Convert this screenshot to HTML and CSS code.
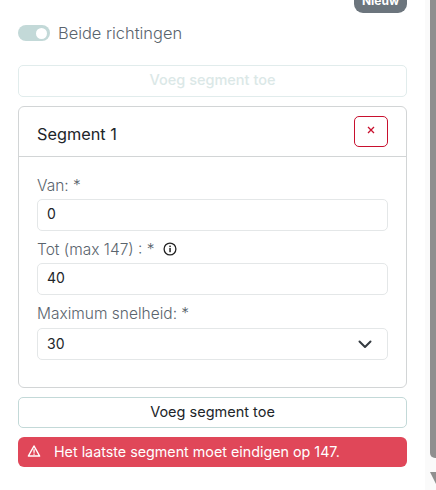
FILE: index.html
```html
<!DOCTYPE html>
<html lang="en">
<head>
  <meta charset="UTF-8" />
  <meta name="viewport" content="width=device-width, initial-scale=1" />
  <title>Segmenten</title>
  <link rel="stylesheet" href="styles.css">
</head>
<body>
  <div class="panel">
    <div class="badge-row"><span class="badge">Nieuw</span></div>

    <div class="switch-row">
      <span class="switch"><span class="switch-knob"></span></span>
      <span class="switch-label">Beide richtingen</span>
    </div>

    <button class="add-btn add-btn-disabled">Voeg segment toe</button>

    <div class="card">
      <div class="card-header">
        <span class="card-title">Segment 1</span>
        <button class="remove-btn">
          <svg width="8" height="8" viewBox="0 0 8 8"><path d="M1 1l6 6M7 1l-6 6" stroke="#c8102e" stroke-width="1.3" fill="none"/></svg>
        </button>
      </div>
      <div class="card-body">
        <label class="field-label">Van: *</label>
        <div class="input">0</div>

        <label class="field-label">Tot (max 147) : *
          <svg class="info-icon" width="14" height="14" viewBox="0 0 14 14">
            <circle cx="7" cy="7" r="5.9" stroke="#222" stroke-width="1.3" fill="none"/>
            <rect x="6.3" y="6" width="1.5" height="4.2" fill="#222"/>
            <rect x="6.3" y="3.6" width="1.5" height="1.5" fill="#222"/>
          </svg>
        </label>
        <div class="input input-tot">40</div>

        <label class="field-label">Maximum snelheid: *</label>
        <div class="input input-select">
          <span>30</span>
          <svg width="16" height="16" viewBox="0 0 16 16"><path d="M2.5 5.5L8 11l5.5-5.5" stroke="#343a40" stroke-width="2" stroke-linecap="round" stroke-linejoin="round" fill="none"/></svg>
        </div>
      </div>
    </div>

    <button class="add-btn add-btn-last">Voeg segment toe</button>

    <div class="alert">
      <svg width="14" height="14" viewBox="0 0 14 14">
        <path d="M7 2L12.6 12H1.4z" stroke="#fff" stroke-width="1.5" stroke-linejoin="round" fill="none"/>
        <rect x="6.4" y="5.2" width="1.3" height="3.6" fill="#fff"/>
        <rect x="6.4" y="9.5" width="1.3" height="1.3" fill="#fff"/>
      </svg>
      <span>Het laatste segment moet eindigen op 147.</span>
    </div>
  </div>

  <!-- page scrollbar -->
  <div class="scroll-track">
    <div class="scroll-thumb"></div>
    <div class="scroll-arrow"></div>
  </div>
</body>
</html>
```

FILE: styles.css
```css
html, body {
  height: 100%;
  overflow: hidden;
}

body {
  font-family: Inter, Lato, sans-serif;
  background: #fff;
  color: #212529;
  margin: 0;
}

.panel {
  width: 389px;
  margin-left: 18px;
}

.badge-row {
  display: flex;
  justify-content: flex-end;
  margin-top: -8px;
  height: 21px;
}

.badge {
  background: #6c757d;
  color: #fff;
  font-size: 12px;
  font-weight: 700;
  width: 53px;
  height: 21px;
  line-height: 17px;
  text-align: center;
  border-radius: 9px;
}

.switch-row {
  display: flex;
  align-items: center;
  gap: 8px;
  height: 26px;
  margin-top: 7px;
}

.switch {
  width: 32px;
  height: 16px;
  border-radius: 8px;
  background: #c3d9d8;
  display: flex;
  justify-content: flex-end;
  align-items: center;
  padding-right: 3px;
  box-sizing: border-box;
}

.switch-knob {
  width: 11px;
  height: 11px;
  border-radius: 50%;
  background: #fff;
}

.switch-label {
  font-size: 16.4px;
  font-weight: 300;
  color: #5a646d;
}

.add-btn {
  display: block;
  width: 100%;
  height: 32px;
  background: #fff;
  border: 1px solid #c3d9d8;
  border-radius: 5px;
  font-family: inherit;
  font-size: 14.5px;
  color: #212529;
  padding: 0 0 2px;
}

.add-btn-disabled {
  margin-top: 19px;
  padding-bottom: 4px;
  border-color: #e1ecec;
  color: #dbe8e7;
  font-weight: 500;
}

.add-btn-last {
  height: 31px;
}

.card {
  margin-top: 9px;
  margin-bottom: 9px;
  height: 282px;
  box-sizing: border-box;
  border: 1px solid #d2d5d6;
  border-radius: 6px;
}

.card-header {
  display: flex;
  justify-content: space-between;
  align-items: center;
  height: 50px;
  box-sizing: border-box;
  border-bottom: 1px solid #d2d5d6;
  padding: 0 18px;
}

.card-title {
  font-size: 16.3px;
  padding-top: 4px;
}

.remove-btn {
  width: 34px;
  height: 31px;
  background: #fff;
  border: 1px solid #c8102e;
  border-radius: 5px;
  padding: 0 0 5px;
}

.card-body {
  padding: 17px 18px 0;
}

.field-label {
  display: block;
  font-size: 15.5px;
  font-weight: 300;
  line-height: 24px;
  height: 25px;
  color: #5a646d;
}

.info-icon {
  margin-left: 4px;
  vertical-align: -1px;
}

.input {
  height: 32px;
  box-sizing: border-box;
  border: 1px solid #e4e7e8;
  border-radius: 5px;
  padding: 0 9px;
  font-size: 14px;
  line-height: 28px;
  margin-bottom: 7px;
}

.input-tot {
  line-height: 27px;
}

.input-select {
  display: flex;
  justify-content: space-between;
  align-items: center;
  padding-right: 14px;
  margin-top: 1px;
}

.alert {
  display: flex;
  align-items: center;
  gap: 13px;
  height: 30px;
  box-sizing: border-box;
  margin-top: 9px;
  padding: 0 0 2px 9px;
  background: #e04759;
  color: #fff;
  border-radius: 6px;
  font-size: 14.3px;
}

.scroll-track {
  position: absolute;
  top: 0;
  right: 0;
  width: 11px;
  height: 490px;
  background: #fafafa;
}

.scroll-thumb {
  position: absolute;
  top: 0;
  right: 0;
  width: 6px;
  height: 458px;
  background: #8f8f8f;
  border-bottom-left-radius: 5px;
}

.scroll-arrow {
  position: absolute;
  top: 472px;
  right: 0;
  border-top: 12px solid #8f8f8f;
  border-left: 6px solid transparent;
}
```
